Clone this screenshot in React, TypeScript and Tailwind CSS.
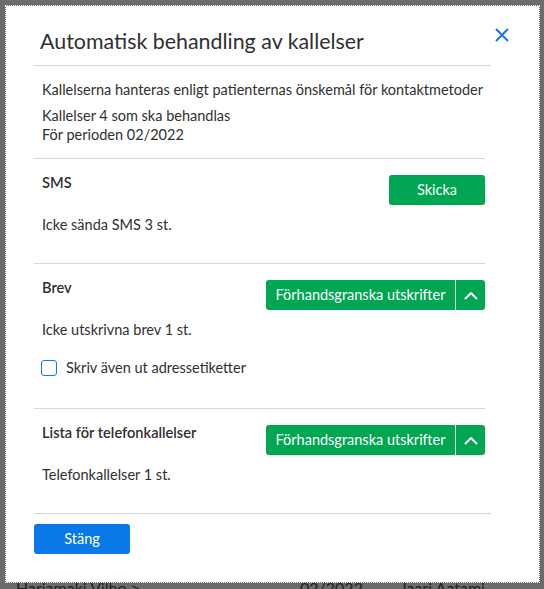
import React from 'react';

const font = { fontFamily: 'Lato, "Open Sans", sans-serif' };

function ChevronUp() {
  return (
    <svg width="14" height="9" viewBox="0 0 14 9" fill="none">
      <path d="M1.5 7.5 7 2l5.5 5.5" stroke="white" strokeWidth="2" strokeLinecap="round" strokeLinejoin="round" />
    </svg>
  );
}

function SplitButton() {
  return (
    <div className="mt-[2px] flex h-[30px] overflow-hidden rounded-[3px] bg-[#00a651] text-white">
      <button className="w-[189px] whitespace-nowrap text-[14.5px] leading-[30px]">Förhandsgranska utskrifter</button>
      <div className="w-px bg-white/90" />
      <button className="flex w-[29px] items-center justify-center">
        <ChevronUp />
      </button>
    </div>
  );
}

export default function App() {
  return (
    <div className="h-[589px] overflow-hidden bg-[#6b6b6b] pl-[5px] pt-[5px] text-[#303030]" style={font}>
      <div className="relative z-10 h-[578px] w-[535px] border border-dotted border-white bg-white bg-clip-padding pl-[28px] pr-[48px]">
        <button className="absolute right-[30px] top-[22px] text-[#1a76e6]">
          <svg width="14" height="14" viewBox="0 0 14 14" fill="none">
            <path d="M1 1l12 12M13 1 1 13" stroke="currentColor" strokeWidth="2" />
          </svg>
        </button>

        <div className="border-b border-[#d3d8de] pb-[9px] pl-[6px] pt-[20px]">
          <h2 className="whitespace-nowrap text-[21.4px] leading-[30px]">Automatisk behandling av kallelser</h2>
        </div>

        <div className="mr-[6px] border-b border-[#d3d8de] pb-[14px] pl-[8px] pt-[14px] text-[14.5px]">
          <p className="whitespace-nowrap leading-[20px]">Kallelserna hanteras enligt patienternas önskemål för kontaktmetoder</p>
          <p className="mt-[6px] leading-[19px]">Kallelser 4 som ska behandlas</p>
          <p className="leading-[19px]">För perioden 02/2022</p>
        </div>

        <section className="mr-[6px] border-b border-[#d3d8de] pb-[28px] pl-[8px] pt-[14px] text-[14.5px]">
          <div className="flex items-start justify-between">
            <h4 className="text-[14.6px] font-semibold leading-[20px]">SMS</h4>
            <button className="mt-[2px] h-[30px] w-[96px] rounded-[3px] bg-[#00a651] text-[14.5px] text-white">Skicka</button>
          </div>
          <p className="mt-[10px] leading-[20px]">Icke sända SMS 3 st.</p>
        </section>

        <section className="mr-[6px] border-b border-[#d3d8de] pb-[30px] pl-[8px] pt-[14px] text-[14.5px]">
          <div className="flex items-start justify-between">
            <h4 className="text-[14.6px] font-semibold leading-[20px]">Brev</h4>
            <SplitButton />
          </div>
          <p className="mt-[10px] leading-[20px]">Icke utskrivna brev 1 st.</p>
          <label className="mt-[18px] flex items-center gap-[9px] leading-[20px]">
            <span className="ml-[-1px] h-[16px] w-[16px] rounded-[3px] border-[1.5px] border-[#1a76e6] bg-white" />
            <span>Skriv även ut adressetiketter</span>
          </label>
        </section>

        <section className="mr-[6px] pb-[28px] pl-[8px] pt-[14px] text-[14.5px]">
          <div className="flex items-start justify-between">
            <h4 className="text-[14.6px] font-semibold leading-[20px]">Lista för telefonkallelser</h4>
            <SplitButton />
          </div>
          <p className="mt-[10px] leading-[20px]">Telefonkallelser 1 st.</p>
        </section>

        <div className="border-t border-[#d6d6d6] pt-[10px]">
          <button className="h-[30px] w-[96px] rounded-[3px] bg-[#0a78e9] text-[14.5px] text-white">Stäng</button>
        </div>
      </div>
      <div className="mt-[-3px] flex text-[16px] leading-[16px] text-[#1f1f1f]">
        <span className="ml-[11px] w-[284px]">Harjamaki Vilho &gt;</span>
        <span className="w-[100px]">02/2022</span>
        <span>Jaari Aatami</span>
      </div>
    </div>
  );
}
